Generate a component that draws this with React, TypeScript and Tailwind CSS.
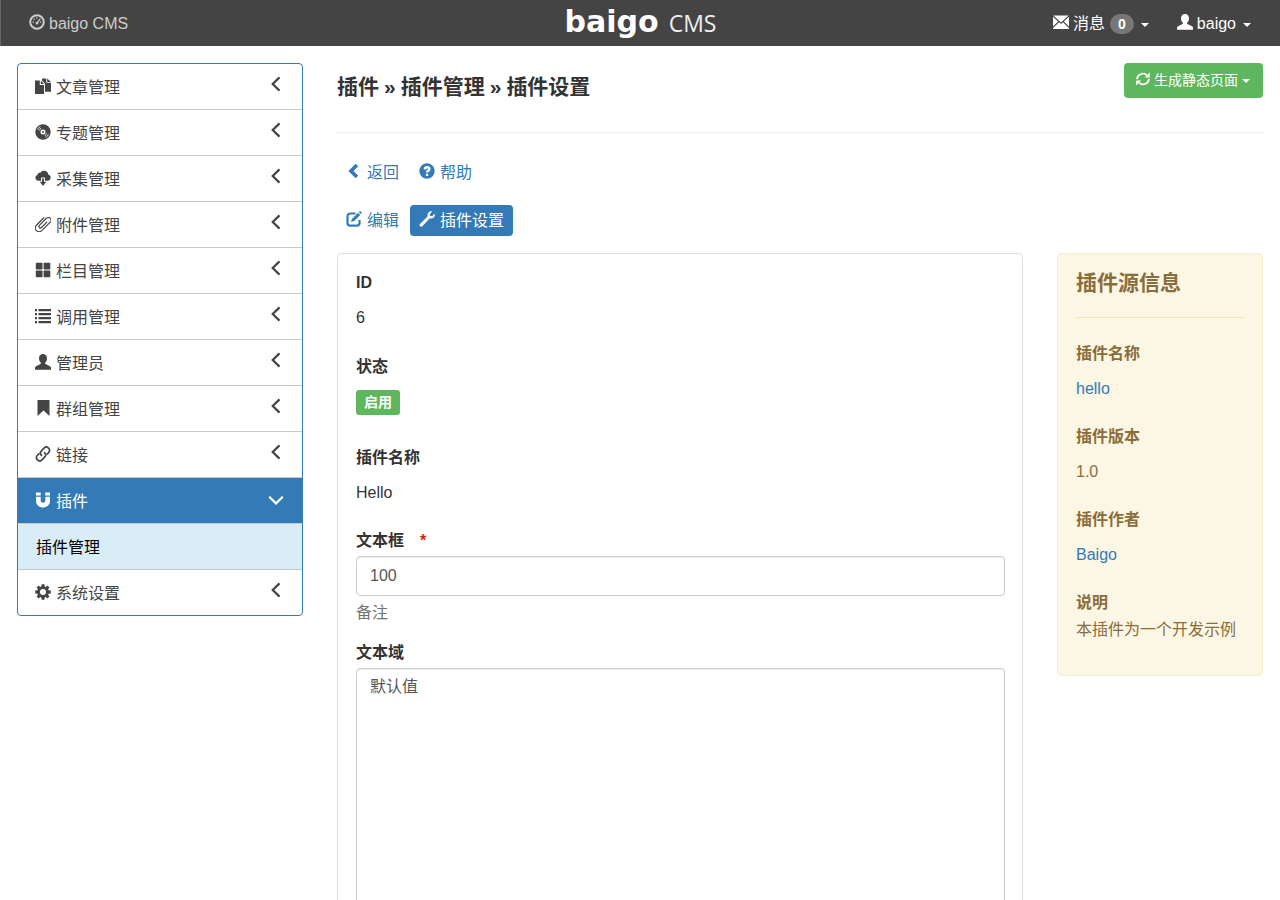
import type { ReactNode } from "react";

type IconName =
  | "dashboard"
  | "duplicate"
  | "cd"
  | "cloud"
  | "clip"
  | "grid"
  | "list"
  | "user"
  | "bookmark"
  | "link"
  | "magnet"
  | "cog"
  | "envelope"
  | "refresh"
  | "back"
  | "help"
  | "edit"
  | "wrench"
  | "menuLeft"
  | "menuDown";

const drawings: Record<IconName, ReactNode> = {
  dashboard: (
    <>
      <circle cx="8" cy="8" r="6.8" fill="none" stroke="currentColor" strokeWidth="2" />
      <circle cx="4.3" cy="8" r=".8" />
      <circle cx="5.2" cy="5.3" r=".8" />
      <circle cx="7.8" cy="4" r=".8" />
      <circle cx="11.7" cy="8" r=".8" />
      <path d="M10.9 4.2l.9.7-2.5 3.7a1.4 1.4 0 1 1-1.200-.9z" />
    </>
  ),
  duplicate: (
    <>
      <path d="M0 2.500h4.800v4.600H9V16H0z" />
      <path d="M5.800 2.600L9 6.100H5.800z" />
      <path d="M7 .5h4.300v4.200H16v9h-6V5.700L7 2.400z" />
      <path d="M12.200.5L16 3.900h-3.800z" />
    </>
  ),
  cd: (
    <>
      <path
        fillRule="evenodd"
        d="M8 .3a7.700 7.700 0 1 0 0 15.400A7.700 7.700 0 0 0 8 .3zm0 5.200a2.500 2.500 0 1 1 0 5 2.500 2.500 0 0 1 0-5z"
      />
      <circle cx="8" cy="8" r="1" />
      <path
        d="M2.600 5.500a6 6 0 0 1 2.700-3M4.200 6.500a4.300 4.300 0 0 1 2-2.300M13.400 10.500a6 6 0 0 1-2.700 3M11.800 9.500a4.300 4.300 0 0 1-2 2.300"
        fill="none"
        stroke="#fff"
        strokeWidth=".9"
      />
    </>
  ),
  cloud: (
    <path d="M3.200 10.800a3 3 0 0 1-.9-5.800A2.700 2.700 0 0 1 5.300 2.700a4.300 4.300 0 0 1 7.900 1.800 3.200 3.200 0 0 1-.4 6.300H9.900V7.600H6.100v3.200zM7.100 8.600h1.800v3.200h2.300L8 15.900l-3.200-4.100h2.300z" />
  ),
  clip: (
    <path
      transform="rotate(-45 8 8)"
      d="M13 4.200H2.500a3.800 3.800 0 0 0 0 7.600h12a2.700 2.700 0 0 0 0-5.400h-10a1.500 1.500 0 0 0 0 3H12"
      fill="none"
      stroke="currentColor"
      strokeWidth="1.200"
      strokeLinecap="round"
    />
  ),
  grid: (
    <>
      <rect x=".8" y=".8" width="6.700" height="6.700" rx=".7" />
      <rect x="8.600" y=".8" width="6.700" height="6.700" rx=".7" />
      <rect x=".8" y="8.600" width="6.700" height="6.700" rx=".7" />
      <rect x="8.600" y="8.600" width="6.700" height="6.700" rx=".7" />
    </>
  ),
  list: (
    <path d="M0 1h2v2.200H0zM3.500 1H16v2.200H3.500zM0 5h2v2.200H0zM3.500 5H16v2.200H3.500zM0 9h2v2.200H0zM3.500 9H16v2.200H3.500zM0 13h2v2.200H0zM3.500 13H16v2.200H3.500z" />
  ),
  user: (
    <path d="M8 .1c2.500 0 4 1.700 4 4.300 0 1.800-.8 3.300-1.800 4.200-.4.700-.1 1.300.7 1.700l3.600 1.600c1 .5 1.500 1.100 1.500 2v1.800H0v-1.800c0-.9.5-1.500 1.500-2l3.600-1.600c.8-.4 1.100-1 .7-1.700C4.800 7.700 4 6.200 4 4.400 4 1.800 5.500.1 8 .1z" />
  ),
  bookmark: <path d="M2.500 0H14.500v16l-6-5.500-6 5.500z" />,
  link: (
    <g
      fill="none"
      stroke="currentColor"
      strokeWidth="1.700"
      strokeLinecap="round"
      strokeLinejoin="round"
    >
      <path d="M6.500 9.400C4.900 7.900 5 6.300 6.200 5.100l2.800-3c2.900-2.900 7.600 1.200 4.700 4.400l-1.500 1.600" />
      <path d="M9.500 6.600c1.600 1.500 1.500 3.100.3 4.300l-2.800 3c-2.900 2.900-7.600-1.200-4.700-4.400l1.500-1.600" />
    </g>
  ),
  magnet: (
    <path d="M1 .4h4.700v3.200H1zM10.300.4H15v3.200h-4.700zM1 4.700h4.700v3.800c0 3 4.600 3 4.600 0V4.700H15v4c0 9-14 9-14 0z" />
  ),
  cog: (
    <path
      fillRule="evenodd"
      d="M6.600.3h2.800l.4 2.200.9.400L12.500 1.600l1.900 2-1.300 1.700.4 1 2.300.3v2.800l-2.300.3-.4 1 1.300 1.700-1.900 2-1.800-1.300-.9.400-.4 2.200H6.600l-.4-2.200-.9-.4-1.800 1.300-1.900-2 1.300-1.700-.4-1-2.300-.3V6.600l2.300-.3.4-1-1.300-1.700 1.900-2 1.800 1.300.9-.4zM8 5a3 3 0 1 0 0 6 3 3 0 0 0 0-6z"
    />
  ),
  envelope: (
    <path d="M.3 1.500h15.400L8 8.500zM0 2.700l5.100 4.700L0 12.500zM16 2.700v9.800l-5.100-5.100zM6 8.200l2 1.800 2-1.800 5.900 5.800v.9H.1V14z" />
  ),
  refresh: (
    <>
      <path
        d="M1.300 8.300C1 3 8-.2 12.400 3.600M14.700 7.700c.3 5.300-6.700 8.500-11.100 4.700"
        fill="none"
        stroke="currentColor"
        strokeWidth="2"
      />
      <path d="M15.700.7v5.600H10zM.3 15.300V9.700H6z" />
    </>
  ),
  back: <path d="M9.600.8l2.600 2.500L7.500 8l4.700 4.700-2.600 2.500L2.400 8z" />,
  help: (
    <path
      fillRule="evenodd"
      d="M8 .3a7.700 7.700 0 1 0 0 15.400A7.700 7.700 0 0 0 8 .3zM4.700 6.400c0-2.200 1.300-3.300 3.400-3.300 2 0 3.400 1 3.400 2.800 0 1.200-.6 1.900-1.400 2.500-.7.500-.8.700-.8 1.200H6.900c0-1.500.6-2 1.500-2.700.5-.4.6-.6.6-1 0-1-1.700-1-1.800.5zM6.900 10.700h2.400V13H6.900z"
    />
  ),
  edit: (
    <>
      <path
        d="M9.600 2.500H4.200A2.700 2.700 0 0 0 1.500 5.200v6.800a2.700 2.700 0 0 0 2.700 2.700h6.600a2.700 2.700 0 0 0 2.700-2.700V9"
        fill="none"
        stroke="currentColor"
        strokeWidth="2.200"
      />
      <path d="M12.100 1.800l2.100 2.100-6.100 6.100-3.200 1 1.100-3.100zM13.400.5c.5-.4.900-.4 1.300 0l.8.8c.4.4.4.8 0 1.300l-.6.5-2.100-2z" />
    </>
  ),
  wrench: (
    <path d="M13.200.5L10.900 2.900l.3 2 1.900.3 2.500-2.400c.9 3-1.900 5.500-4.900 4.500L3.300 15.200c-1.400 1.500-3.800-.7-2.300-2.200l7.600-7.500C7.800 2.400 10.200-.3 13.200.5z" />
  ),
  menuLeft: (
    <path d="M11.500 1.400L4.700 8l6.800 6.600" fill="none" stroke="currentColor" strokeWidth="2.200" />
  ),
  menuDown: (
    <path d="M1.200 4.700L8 11.400l6.800-6.700" fill="none" stroke="currentColor" strokeWidth="2.200" />
  ),
};

function Icon({ name, className = "mb-1 size-4" }: { name: IconName; className?: string }) {
  return (
    <svg viewBox="0 0 16 16" fill="currentColor" aria-hidden="true" className={`shrink-0 ${className}`}>
      {drawings[name]}
    </svg>
  );
}

function Caret() {
  return (
    <svg viewBox="0 0 8 4" fill="currentColor" aria-hidden="true" className="mt-0.5 h-1 w-2 shrink-0">
      <path d="M0 0h8L4 4z" />
    </svg>
  );
}

const menu: { icon: IconName; label: string; children?: string[] }[] = [
  { icon: "duplicate", label: "文章管理" },
  { icon: "cd", label: "专题管理" },
  { icon: "cloud", label: "采集管理" },
  { icon: "clip", label: "附件管理" },
  { icon: "grid", label: "栏目管理" },
  { icon: "list", label: "调用管理" },
  { icon: "user", label: "管理员" },
  { icon: "bookmark", label: "群组管理" },
  { icon: "link", label: "链接" },
  { icon: "magnet", label: "插件", children: ["插件管理"] },
  { icon: "cog", label: "系统设置" },
];

function Header() {
  return (
    <header className="grid h-[46px] grid-cols-3 items-center border-l border-[#666] bg-[#444] px-7 text-white">
      <a href="#" className="flex items-center gap-1 pt-0.5 text-[#ccc]">
        <Icon name="dashboard" />
        baigo CMS
      </a>
      <div className="flex items-baseline justify-center gap-2.5 pb-0.5">
        <span className="font-['DejaVu_Sans'] text-[30px] leading-8 font-bold">baigo</span>
        <span className="font-['Open_Sans'] text-[23px] leading-8 text-[#eee]">CMS</span>
      </div>
      <nav className="flex items-center justify-end gap-7 pt-0.5 pr-px">
        <button type="button" className="flex items-center gap-1">
          <Icon name="envelope" />
          消息
          <span className="ml-px rounded-full bg-[#777] px-2 text-sm leading-5 font-bold">0</span>
          <span className="ml-[3px]">
            <Caret />
          </span>
        </button>
        <button type="button" className="flex items-center gap-1">
          <Icon name="user" />
          baigo
          <span className="ml-[3px]">
            <Caret />
          </span>
        </button>
      </nav>
    </header>
  );
}

function Sidebar() {
  return (
    <nav className="divide-y divide-[#c3c9ce] overflow-hidden rounded border border-[#337ab7] text-[#444]">
      {menu.map((item) => (
        <div key={item.label} className="divide-y divide-[#c3c9ce]">
          <a
            href="#"
            className={
              item.children
                ? "flex h-[46px] items-center gap-[5px] bg-[#337ab7] pt-0.5 pr-[18px] pl-[17px] text-white"
                : "flex h-[45px] items-center gap-[5px] pt-0.5 pr-[18px] pl-[17px]"
            }
          >
            <Icon name={item.icon} />
            <span className="grow">{item.label}</span>
            {item.children ? <Icon name="menuDown" /> : <Icon name="menuLeft" className="mb-2 size-4" />}
          </a>
          {item.children?.map((child) => (
            <a key={child} href="#" className="flex h-[45px] items-center bg-[#d9edf7] px-[18px] pt-0.5 text-black">
              {child}
            </a>
          ))}
        </div>
      ))}
    </nav>
  );
}

function Pill({ icon, children, active = false }: { icon: IconName; children: ReactNode; active?: boolean }) {
  return (
    <a
      href="#"
      className={
        active
          ? "flex h-[31px] items-center gap-[5px] rounded bg-[#337ab7] px-[9px] text-white"
          : "flex h-[31px] items-center gap-[5px] rounded px-[9px] text-[#337ab7]"
      }
    >
      <Icon name={icon} className="mb-[3px] size-4" />
      {children}
    </a>
  );
}

function Entry({ term, children }: { term: string; children: ReactNode }) {
  return (
    <div>
      <dt className="leading-7 font-bold">{term}</dt>
      <dd className="mt-[7px] leading-7">{children}</dd>
    </div>
  );
}

function SettingsForm() {
  return (
    <form className="rounded border border-[#ddd] pt-[15px] pr-[17px] pb-5 pl-[18px]">
      <dl>
        <Entry term="ID">6</Entry>
        <div className="mt-[21px]">
          <dt className="leading-7 font-bold">状态</dt>
          <dd className="mt-[9px] flex">
            <span className="rounded-[3px] bg-[#5eb75e] px-2 text-sm leading-[25px] font-bold text-white">启用</span>
          </dd>
        </div>
        <div className="mt-[29px]">
          <Entry term="插件名称">Hello</Entry>
        </div>
      </dl>
      <label htmlFor="text" className="mt-5 flex gap-4 leading-7 font-bold">
        文本框
        <span className="text-[#d9230f]">*</span>
      </label>
      <input
        id="text"
        type="text"
        defaultValue="100"
        className="mt-px block h-10 w-full rounded border border-[#ccc] px-[13px] text-[#555] shadow-[inset_0_1px_1px_rgba(0,0,0,0.075)]"
      />
      <p className="mt-[3px] leading-7 text-[#737373]">备注</p>
      <label htmlFor="area" className="mt-3 block leading-7 font-bold">
        文本域
      </label>
      <textarea
        id="area"
        rows={12}
        defaultValue="默认值"
        className="mt-px block w-full rounded border border-[#ccc] px-[13px] py-1 leading-7 text-[#555] shadow-[inset_0_1px_1px_rgba(0,0,0,0.075)]"
      />
    </form>
  );
}

function SourceInfo() {
  return (
    <aside className="rounded border border-[#f8edcf] bg-[#fcf7e4] pt-[14px] pr-[17px] pb-8 pl-[18px] text-[#8a6d3b]">
      <h4 className="border-b border-[#f3e3ba] pb-[19px] text-[21px] leading-[30px] font-bold">插件源信息</h4>
      <dl className="mt-[22px] flex flex-col gap-5">
        <Entry term="插件名称">
          <a href="#" className="text-[#337ab7]">
            hello
          </a>
        </Entry>
        <Entry term="插件版本">1.0</Entry>
        <Entry term="插件作者">
          <a href="#" className="text-[#337ab7]">
            Baigo
          </a>
        </Entry>
        <div>
          <dt className="leading-7 font-bold">说明</dt>
          <dd className="leading-[26px]">本插件为一个开发示例</dd>
        </div>
      </dl>
    </aside>
  );
}

export default function App() {
  return (
    <div className="min-h-screen bg-white font-['Liberation_Sans','Noto_Sans_CJK_SC',sans-serif] text-base text-[#333]">
      <Header />
      <div className="grid grid-cols-[1fr_3fr] pt-[17px]">
        <div className="px-[17px]">
          <Sidebar />
        </div>
        <main className="px-[17px]">
          <div className="flex items-start justify-between border-b border-[#eee] pb-[21px]">
            <h3 className="flex gap-[5px] text-[21px] leading-[48px] font-bold">
              <span>插件</span>
              <span>»</span>
              <span>插件管理</span>
              <span>»</span>
              <span>插件设置</span>
            </h3>
            <button
              type="button"
              className="flex h-[35px] items-center gap-1 rounded bg-[#5eb75e] pr-[13px] pb-0.5 pl-3 text-sm text-white"
            >
              <Icon name="refresh" className="mb-0.5 size-[14px]" />
              生成静态页面
              <Caret />
            </button>
          </div>
          <div className="mt-6 flex gap-0.5">
            <Pill icon="back">返回</Pill>
            <Pill icon="help">帮助</Pill>
          </div>
          <div className="mt-[17px] flex gap-0.5">
            <Pill icon="edit">编辑</Pill>
            <Pill icon="wrench" active>
              插件设置
            </Pill>
          </div>
          <div className="-mx-[17px] mt-[17px] grid grid-cols-[3fr_1fr]">
            <div className="px-[17px]">
              <SettingsForm />
            </div>
            <div className="px-[17px]">
              <SourceInfo />
            </div>
          </div>
        </main>
      </div>
    </div>
  );
}
